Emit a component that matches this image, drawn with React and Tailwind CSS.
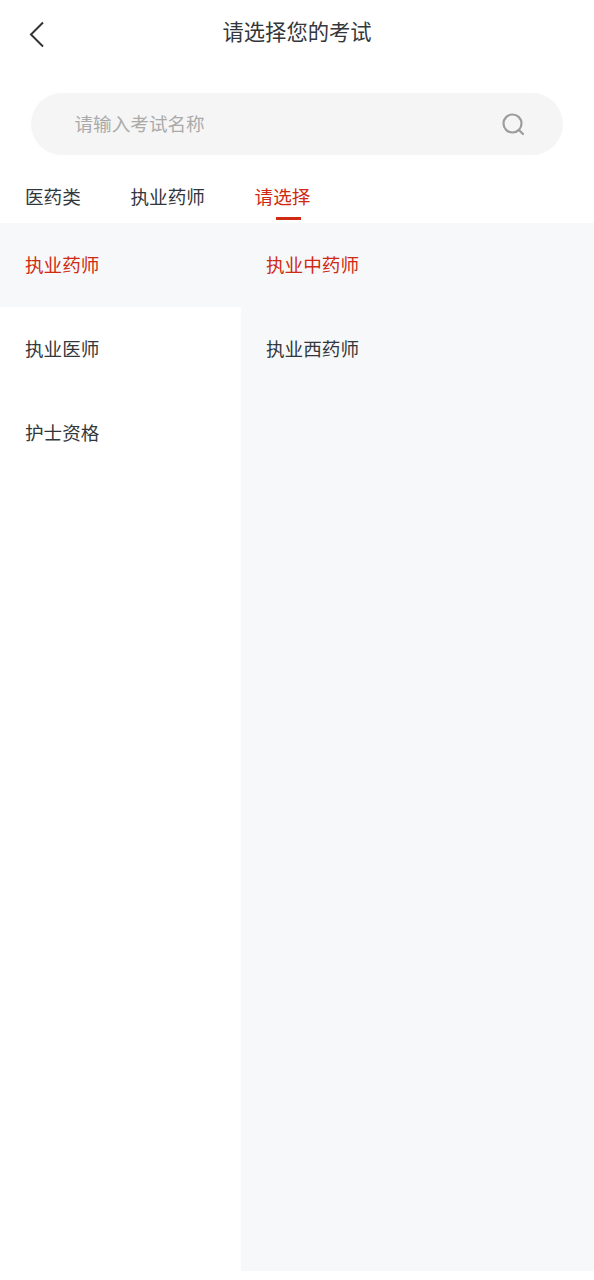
import React from "react";

const cjk = "font-['Noto_Sans_CJK_SC','Noto_Sans',sans-serif]";

const tabs = ["医药类", "执业药师"];
const leftItems = ["执业药师", "执业医师", "护士资格"];
const rightItems = ["执业中药师", "执业西药师"];

const App = () => {
  return (
    <div className={`${cjk} w-[594px] h-[1280px] flex flex-col bg-white text-[#33373b]`}>
      {/* Header */}
      <div className="h-[93px] shrink-0 flex items-start">
        <div className="w-[222.5px] shrink-0 pl-[29px] pt-[21px]">
          <svg width="16" height="27" viewBox="0 0 16 27" fill="none" stroke="#333" strokeWidth="2">
            <path d="M14 1.5 L2 13.5 L14 25.5" />
          </svg>
        </div>
        <div className="text-[21.3px] leading-[30px] pt-[16px] whitespace-nowrap">请选择您的考试</div>
      </div>

      {/* Search */}
      <div className="mx-[31px] h-[62px] shrink-0 rounded-full bg-[#f5f5f5] flex items-center justify-between pl-[43.5px] pr-[38px]">
        <span className="text-[18.6px] text-[#aaa] mb-[2px]">请输入考试名称</span>
        <svg width="24" height="24" viewBox="0 0 24 24" fill="none" stroke="#9c9c9c" strokeWidth="2.2" strokeLinecap="round">
          <circle cx="11.5" cy="11.5" r="9" />
          <path d="M18.5 18.5 L22 22" />
        </svg>
      </div>

      {/* Tabs */}
      <div className="h-[68px] shrink-0 flex gap-[49.7px] pl-[25px] pt-[27px] text-[18.6px] leading-[28px]">
        {tabs.map((tab) => (
          <span key={tab} className="whitespace-nowrap">{tab}</span>
        ))}
        <div className="flex flex-col text-[#cf2a12]">
          <span className="whitespace-nowrap">请选择</span>
          <div className="ml-[21px] mt-[7px] w-[25px] h-[3px] bg-[#cf2a12]" />
        </div>
      </div>

      {/* Lists */}
      <div className="h-[1048px] shrink-0 flex text-[18.6px]">
        <div className="w-[241px] shrink-0">
          {leftItems.map((item, i) => (
            <div
              key={item}
              className={
                i === 0
                  ? "h-[84px] flex items-center pl-[25px] pb-[2px] bg-[#f7f8fa] text-[#cf2a12]"
                  : "h-[84px] flex items-center pl-[25px] pb-[2px]"
              }
            >
              {item}
            </div>
          ))}
        </div>
        <div className="flex-1 bg-[#f7f8fa]">
          {rightItems.map((item, i) => (
            <div
              key={item}
              className={
                i === 0
                  ? "h-[84px] flex items-center pl-[25px] pb-[2px] text-[#cf2a12]"
                  : "h-[84px] flex items-center pl-[25px] pb-[2px]"
              }
            >
              {item}
            </div>
          ))}
        </div>
      </div>
    </div>
  );
};

export default App;
